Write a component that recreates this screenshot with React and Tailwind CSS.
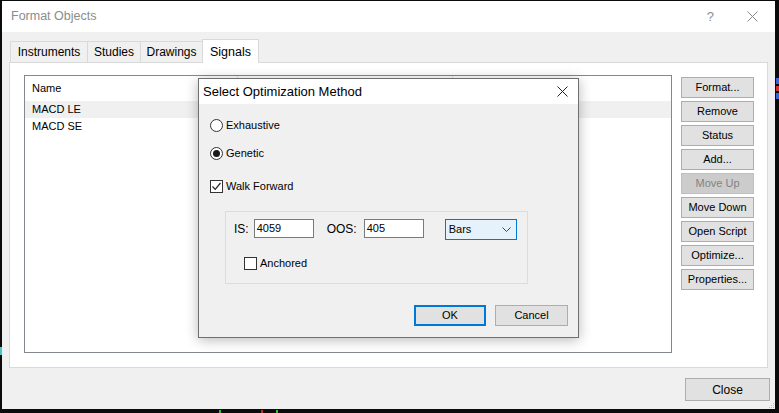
import React from "react";

const sideButtons = [
  { label: "Format..." },
  { label: "Remove" },
  { label: "Status" },
  { label: "Add..." },
  { label: "Move Up", disabled: true },
  { label: "Move Down" },
  { label: "Open Script" },
  { label: "Optimize..." },
  { label: "Properties..." },
];

const tabs = [
  { label: "Instruments", w: "w-[78px]" },
  { label: "Studies", w: "w-[54px]" },
  { label: "Drawings", w: "w-[63px]" },
];

function Radio({ checked }) {
  return (
    <span className="w-[13px] h-[13px] rounded-full border border-[#333] bg-white flex items-center justify-center">
      {checked && <span className="w-[7px] h-[7px] rounded-full bg-[#1a1a1a]" />}
    </span>
  );
}

function Checkbox({ checked }) {
  return (
    <span className="w-[13px] h-[13px] border border-[#333] bg-white flex items-center justify-center">
      {checked && (
        <svg width="11" height="11" viewBox="0 0 11 11">
          <polyline points="1.5,5.5 4.2,8.3 9.5,2" fill="none" stroke="#222" strokeWidth="1.2" />
        </svg>
      )}
    </span>
  );
}

function CloseGlyph({ color = "#777", size = 11 }) {
  return (
    <svg width={size} height={size} viewBox="0 0 11 11">
      <path d="M0.5 0.5 L10.5 10.5 M10.5 0.5 L0.5 10.5" stroke={color} strokeWidth="1" />
    </svg>
  );
}

export default function App() {
  return (
    <div className="relative w-[779px] h-[413px] overflow-hidden bg-[#0b0b0b] font-['Liberation_Sans',Arial,sans-serif] text-black">
      {/* chart bits peeking out behind the window */}
      <span className="absolute left-0 top-[347px] w-[2px] h-[8px] bg-[#46c6c8]" />
      <span className="absolute right-0 top-[78px] w-[3px] h-[6px] bg-[#3a63d8]" />
      <span className="absolute right-0 top-[86px] w-[3px] h-[5px] bg-[#d03030]" />
      <span className="absolute right-0 top-[93px] w-[3px] h-[6px] bg-[#3a63d8]" />
      <span className="absolute left-[219px] bottom-0 w-[2px] h-[3px] bg-[#29c33a]" />
      <span className="absolute left-[261px] bottom-0 w-[2px] h-[3px] bg-[#d02424]" />
      <span className="absolute left-[276px] bottom-0 w-[2px] h-[3px] bg-[#29c33a]" />

      {/* Format Objects window */}
      <div className="relative ml-[2px] mt-[1px] w-[773px] h-[408px] bg-[#f0f0f0] flex flex-col">
        <div className="h-[31px] bg-white flex items-center pl-[9px] pr-[17px] shrink-0">
          <span className="text-[12.5px] text-[#8c8c8c]">Format Objects</span>
          <span className="ml-auto mr-[33px] text-[13px] text-[#8c8c8c]">?</span>
          <CloseGlyph color="#8a8a8a" />
        </div>

        <div className="px-[7px] pt-[7px]">
          <div className="flex items-end pl-[1px]">
            {tabs.map((t) => (
              <div
                key={t.label}
                className={`${t.w} -mr-px h-[21px] border border-b-0 border-[#d9d9d9] bg-[#f0f0f0] flex items-center justify-center text-[12px]`}
              >
                {t.label}
              </div>
            ))}
            <div className="relative z-10 w-[57px] h-[24px] -mb-px border border-b-0 border-[#d9d9d9] bg-white flex items-start pt-[3px] justify-center text-[12.5px]">
              Signals
            </div>
          </div>

          <div className="h-[306px] bg-white border border-[#d9d9d9] flex items-start pl-[14px] pt-[12px]">
            {/* list */}
            <div className="w-[648px] h-[278px] border border-[#828790] bg-white text-[11px]">
              <div className="h-[25px] flex">
                <div className="w-[213px] border-r border-[#e5e5e5] flex items-center pl-[7px]">Name</div>
                <div className="w-[215px] border-r border-[#e5e5e5]" />
              </div>
              <div className="h-[17px] bg-[#f0f0f0] flex items-center pl-[7px]">MACD LE</div>
              <div className="h-[17px] flex items-center pl-[7px]">MACD SE</div>
            </div>

            {/* buttons */}
            <div className="ml-[9px] mt-[2px] flex flex-col gap-[3px]">
              {sideButtons.map((b) => (
                <div
                  key={b.label}
                  className={`h-[21px] w-[73px] border text-[11px] flex items-center justify-center ${
                    b.disabled
                      ? "border-[#bfbfbf] bg-[#cccccc] text-[#838383]"
                      : "border-[#adadad] bg-[#e1e1e1]"
                  }`}
                >
                  {b.label}
                </div>
              ))}
            </div>
          </div>
        </div>

        <div className="flex justify-end pr-[5px] mt-[10px]">
          <div className="w-[85px] h-[23px] border border-[#adadad] bg-[#e1e1e1] text-[12px] flex items-center justify-center">
            Close
          </div>
        </div>

        {/* resize grip */}
        <div className="absolute right-[1px] bottom-[1px] grid grid-cols-3 gap-[1px]">
          <span className="w-[1px] h-[1px]" />
          <span className="w-[1px] h-[1px]" />
          <span className="w-[1px] h-[1px] bg-[#bbb]" />
          <span className="w-[1px] h-[1px]" />
          <span className="w-[1px] h-[1px] bg-[#bbb]" />
          <span className="w-[1px] h-[1px] bg-[#bbb]" />
          <span className="w-[1px] h-[1px] bg-[#bbb]" />
          <span className="w-[1px] h-[1px] bg-[#bbb]" />
          <span className="w-[1px] h-[1px] bg-[#bbb]" />
        </div>

        {/* Select Optimization Method dialog */}
        <div className="absolute left-[196px] top-[77px] w-[381px] h-[260px] border border-[#6f6f6f] bg-[#f0f0f0] shadow-[0_2px_12px_rgba(0,0,0,0.28)] flex flex-col">
          <div className="h-[25px] bg-white flex items-center pl-[4px] pr-[10px] shrink-0">
            <span className="text-[13px]">Select Optimization Method</span>
            <span className="ml-auto">
              <CloseGlyph color="#222" />
            </span>
          </div>

          <div className="pl-[11px] pr-[10px] pt-[13px] text-[11px] flex flex-col">
            <div className="h-[16px] flex items-center gap-[3px]">
              <Radio />
              <span>Exhaustive</span>
            </div>
            <div className="h-[16px] mt-[12px] flex items-center gap-[3px]">
              <Radio checked />
              <span>Genetic</span>
            </div>
            <div className="h-[16px] mt-[17px] flex items-center gap-[3px]">
              <Checkbox checked />
              <span>Walk Forward</span>
            </div>

            <div className="ml-[15px] mt-[17px] w-[303px] h-[73px] border border-[#dcdcdc] pl-[8px] pt-[7px]">
              <div className="flex items-start">
                <span className="h-[19px] flex items-center text-[12px]">IS:</span>
                <div className="ml-[5px] w-[60px] h-[19px] border border-[#7a7a7a] bg-white pl-[2px] flex items-center text-[11px]">
                  4059
                </div>
                <span className="ml-[13px] h-[19px] flex items-center text-[12px]">OOS:</span>
                <div className="ml-[7px] w-[60px] h-[19px] border border-[#7a7a7a] bg-white pl-[2px] flex items-center text-[11px]">
                  405
                </div>
                <div className="ml-[21px] w-[72px] h-[21px] border border-[#0078d7] bg-[#e5f1fb] pl-[3px] pr-[5px] flex items-center">
                  <span>Bars</span>
                  <svg className="ml-auto" width="9" height="5" viewBox="0 0 9 5">
                    <polyline points="0.5,0.5 4.5,4.5 8.5,0.5" fill="none" stroke="#444" strokeWidth="1" />
                  </svg>
                </div>
              </div>
              <div className="mt-[16px] ml-[10px] h-[14px] flex items-center gap-[3px]">
                <Checkbox />
                <span>Anchored</span>
              </div>
            </div>

            <div className="mt-[21px] flex justify-end gap-[9px]">
              <div className="w-[72px] h-[21px] border-2 border-[#0078d7] bg-[#e1e1e1] flex items-center justify-center">
                OK
              </div>
              <div className="w-[73px] h-[21px] border border-[#adadad] bg-[#e1e1e1] flex items-center justify-center">
                Cancel
              </div>
            </div>
          </div>
        </div>
      </div>
    </div>
  );
}
